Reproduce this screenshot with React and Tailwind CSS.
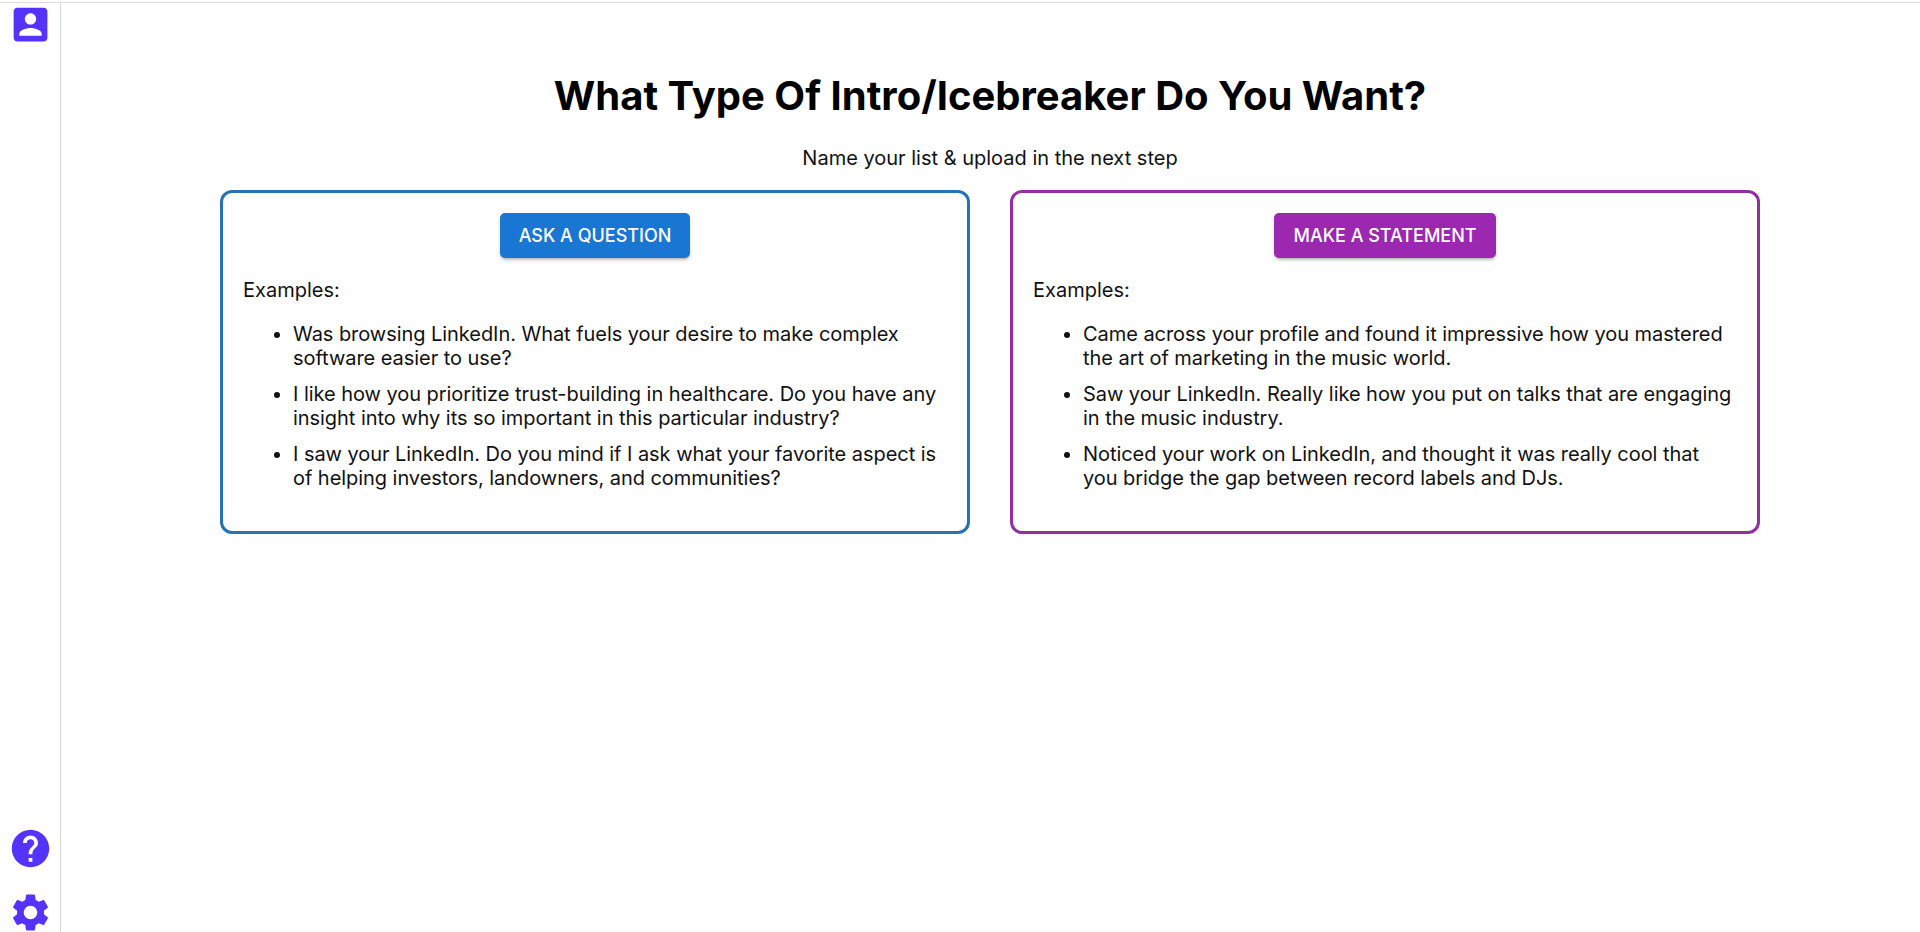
const cards = [
  {
    label: 'ASK A QUESTION',
    border: 'border-[#2771b5]',
    button: 'bg-[#1976d2]',
    examples: [
      'Was browsing LinkedIn. What fuels your desire to make complex software easier to use?',
      'I like how you prioritize trust-building in healthcare. Do you have any insight into why its so important in this particular industry?',
      'I saw your LinkedIn. Do you mind if I ask what your favorite aspect is of helping investors, landowners, and communities?',
    ],
  },
  {
    label: 'MAKE A STATEMENT',
    border: 'border-[#922fa3]',
    button: 'bg-[#9c27b0]',
    examples: [
      'Came across your profile and found it impressive how you mastered the art of marketing in the music world.',
      'Saw your LinkedIn. Really like how you put on talks that are engaging in the music industry.',
      'Noticed your work on LinkedIn, and thought it was really cool that you bridge the gap between record labels and DJs.',
    ],
  },
];

function Icon({ d }) {
  return (
    <svg viewBox="0 0 24 24" className="w-[45px] h-[45px] fill-[#5533ff]">
      <path d={d} />
    </svg>
  );
}

function Card({ label, border, button, examples }) {
  return (
    <div className={`w-[750px] h-[344px] border-[3px] rounded-xl px-5 pt-5 ${border}`}>
      <div className="flex justify-center">
        <button className={`h-[45px] px-[19px] rounded-[5px] text-white text-[18px] font-medium shadow-[0_3px_3px_-2px_rgba(0,0,0,0.25),0_2px_4px_rgba(0,0,0,0.14)] ${button}`}>{label}</button>
      </div>
      <p className="mt-5 leading-6">Examples:</p>
      <ul className="list-disc pl-[50px] mt-5 flex flex-col gap-3 leading-6 tracking-[-0.05px]">
        {examples.map(e => <li key={e}>{e}</li>)}
      </ul>
    </div>
  );
}

export default function App() {
  return (
    <div className="h-[932px] pt-[2px] bg-white overflow-hidden font-['Inter',sans-serif]">
      <div className="h-[930px] flex border-t border-[#dcdcdc] text-[20px] text-[#111]">
        <aside className="w-[61px] shrink-0 border-r border-[#d8d8d8] flex flex-col items-center justify-between">
          <div className="-mt-px">
            <Icon d="M3 5v14c0 1.1.89 2 2 2h14c1.1 0 2-.9 2-2V5c0-1.1-.9-2-2-2H5c-1.11 0-2 .9-2 2zm12 4c0 1.66-1.34 3-3 3s-3-1.34-3-3 1.34-3 3-3 3 1.34 3 3zm-9 8c0-2 4-3.1 6-3.1s6 1.1 6 3.1v1H6v-1z" />
          </div>
          <div className="flex flex-col gap-[19px] mb-[-3px]">
            <Icon d="M12 2C6.48 2 2 6.48 2 12s4.48 10 10 10 10-4.48 10-10S17.52 2 12 2zm1 17h-2v-2h2v2zm2.07-7.75l-.9.92C13.45 12.9 13 13.5 13 15h-2v-.5c0-1.1.45-2.1 1.17-2.83l1.24-1.26c.37-.36.59-.86.59-1.41 0-1.1-.9-2-2-2s-2 .9-2 2H8c0-2.21 1.79-4 4-4s4 1.79 4 4c0 .88-.36 1.68-.93 2.25z" />
            <Icon d="M19.14 12.94c.04-.3.06-.61.06-.94 0-.32-.02-.64-.07-.94l2.03-1.58c.18-.14.23-.41.12-.61l-1.92-3.32c-.12-.22-.37-.29-.59-.22l-2.39.96c-.5-.38-1.03-.7-1.62-.94l-.36-2.54c-.04-.24-.24-.41-.48-.41h-3.84c-.24 0-.43.17-.47.41l-.36 2.54c-.59.24-1.13.57-1.62.94l-2.39-.96c-.22-.08-.47 0-.59.22L2.74 8.87c-.12.21-.08.47.12.61l2.03 1.58c-.05.3-.09.63-.09.94s.02.64.07.94l-2.03 1.58c-.18.14-.23.41-.12.61l1.92 3.32c.12.22.37.29.59.22l2.39-.96c.5.38 1.03.7 1.62.94l.36 2.54c.05.24.24.41.48.41h3.84c.24 0 .44-.17.47-.41l.36-2.54c.59-.24 1.13-.56 1.62-.94l2.39.96c.22.08.47 0 .59-.22l1.92-3.32c.12-.22.07-.47-.12-.61l-2.01-1.58zM12 15.6c-1.98 0-3.6-1.62-3.6-3.6s1.62-3.6 3.6-3.6 3.6 1.62 3.6 3.6-1.62 3.6-3.6 3.6z" />
          </div>
        </aside>
        <main className="flex-1 flex flex-col items-center pt-[65px] pr-px">
          <h1 className="text-[40px] leading-[56px] font-bold text-black">What Type Of Intro/Icebreaker Do You Want?</h1>
          <p className="mt-[22px] leading-6">Name your list &amp; upload in the next step</p>
          <div className="flex gap-[40px] mt-5">
            {cards.map(c => <Card key={c.label} {...c} />)}
          </div>
        </main>
      </div>
    </div>
  );
}
